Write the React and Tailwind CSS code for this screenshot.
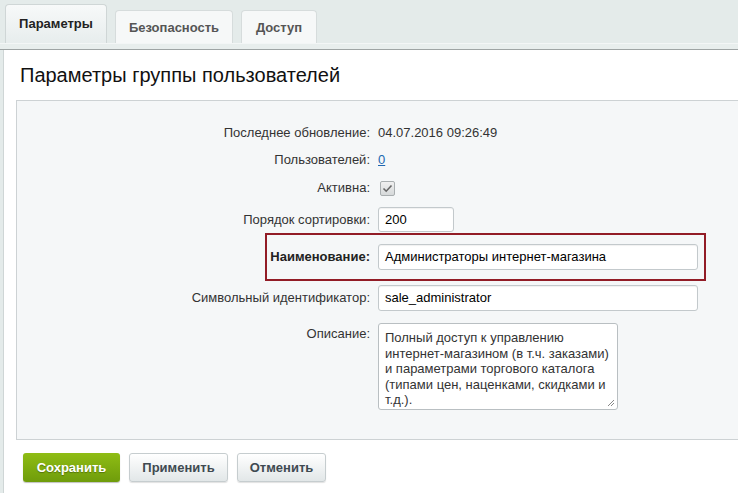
import React from 'react';

const tabs = [
	{ id: 'params', title: 'Параметры', active: true, w: 'w-[102px]' },
	{ id: 'security', title: 'Безопасность', w: 'w-[118px]' },
	{ id: 'access', title: 'Доступ', w: 'w-[76px]' },
];

function Label({ children, bold }) {
	return (
		<div className={`w-[361px] shrink-0 pr-[8px] text-right text-[13px] text-[#333] ${bold ? 'font-bold text-[#222]' : ''}`}>
			{children}
		</div>
	);
}

function TextInput({ value, className = '' }) {
	return (
		<div
			className={`flex items-center rounded-[3px] border border-[#c3c9cc] bg-white pl-[6px] text-[13px] text-black shadow-[inset_0_1px_1px_rgba(0,0,0,0.06)] ${className}`}
		>
			{value}
		</div>
	);
}

export default function App() {
	return (
		<div className="h-[493px] w-full overflow-hidden bg-[#e4ebea] font-['Liberation_Sans',Arial,sans-serif]">
			{/* вкладки */}
			<div className="flex h-[43px] items-end gap-[8px] pl-[5px]">
				{tabs.map((tab) => (
					<div
						key={tab.id}
						className={`flex items-center justify-center rounded-t-[4px] border border-b-0 text-[13px] font-bold ${tab.w} ${
							tab.active
								? 'h-[39px] border-[#cfd6d6] bg-gradient-to-b from-[#f7f9f9] to-[#e7eded] text-[#222]'
								: 'h-[33px] border-[#d6dcdc] bg-[#f6f8f8] text-[#555]'
						}`}
					>
						<span className={tab.active ? '' : 'pt-[1px]'}>{tab.title}</span>
					</div>
				))}
			</div>
			<div className="h-[7px] border-t border-[#f3f6f6] border-b-[1px] border-b-[#9ea4a4] bg-[#e8eeed]" />

			{/* панель */}
			<div className="ml-[3px] h-[443px] border-l border-[#cfd6d6] bg-white">
				<h1 className="pl-[16px] pt-[13px] text-[20px] leading-[24px] text-[#111]">Параметры группы пользователей</h1>

				<div className="ml-[12px] mt-[13px] h-[340px] border border-r-0 border-[#cdd2d4] bg-[#f5f7f8] pt-[22px]">
					<div className="flex h-[20px] items-center">
						<Label>Последнее обновление:</Label>
						<span className="text-[13px] text-[#333]">04.07.2016 09:26:49</span>
					</div>

					<div className="mt-[7px] flex h-[20px] items-center">
						<Label>Пользователей:</Label>
						<a className="text-[13px] text-[#2067b0] underline">0</a>
					</div>

					<div className="mt-[8px] flex h-[20px] items-center">
						<Label>Активна:</Label>
						<span className="ml-[2px] flex h-[15px] w-[15px] items-center justify-center rounded-[2px] border border-[#a9aeb0] bg-gradient-to-b from-[#f0f0f0] to-[#d6d9da]">
							<svg width="11" height="9" viewBox="0 0 11 9" fill="none">
								<path d="M1.5 4.5 L4.2 7.2 L9.5 1.5" stroke="#666" strokeWidth="1.6" />
							</svg>
						</span>
					</div>

					<div className="mt-[9px] flex h-[25px] items-center">
						<Label>Порядок сортировки:</Label>
						<TextInput value="200" className="h-[25px] w-[76px]" />
					</div>

					{/* выделенное поле */}
					<div className="ml-[248px] mt-[1px] flex h-[48px] w-[441px] items-center border-2 border-[#921c26]">
						<div className="w-[111px] shrink-0 pr-[8px] text-right text-[13px] font-bold text-[#222]">Наименование:</div>
						<TextInput value="Администраторы интернет-магазина" className="h-[26px] w-[320px]" />
					</div>

					<div className="mt-[4px] flex h-[26px] items-center">
						<Label>Символьный идентификатор:</Label>
						<TextInput value="sale_administrator" className="h-[26px] w-[320px]" />
					</div>

					<div className="mt-[12px] flex items-start">
						<div className="w-[361px] shrink-0 pr-[8px] pt-[1px] text-right text-[13px] text-[#333]">Описание:</div>
						<div className="relative h-[87px] w-[240px] rounded-[3px] border border-[#b9bfc2] bg-white px-[6px] pt-[6px] text-[13px] leading-[15.5px] text-[#333]">
							Полный доступ к управлению интернет-магазином (в т.ч. заказами) и параметрами торгового каталога (типами цен,
							наценками, скидками и т.д.).
							<svg className="absolute bottom-[2px] right-[2px]" width="8" height="8" viewBox="0 0 8 8">
								<path d="M7 1 L1 7 M7 4 L4 7" stroke="#888" strokeWidth="1" />
							</svg>
						</div>
					</div>
				</div>

				{/* кнопки */}
				<div className="ml-[19px] mt-[13px] flex gap-[9px]">
					<button className="h-[29px] w-[97px] rounded-[3px] bg-gradient-to-b from-[#8fbd14] to-[#6f9c0b] text-[13px] font-bold text-white shadow-[0_1px_1px_rgba(0,0,0,0.25)] [text-shadow:0_1px_1px_rgba(0,0,0,0.3)]">
						Сохранить
					</button>
					<button className="h-[29px] w-[99px] rounded-[3px] border border-[#c6cdcf] bg-gradient-to-b from-[#ffffff] to-[#e2e7e8] text-[13px] font-bold text-[#3f4a51] shadow-[0_1px_1px_rgba(0,0,0,0.12)]">
						Применить
					</button>
					<button className="h-[29px] w-[89px] rounded-[3px] border border-[#c6cdcf] bg-gradient-to-b from-[#ffffff] to-[#e2e7e8] text-[13px] font-bold text-[#3f4a51] shadow-[0_1px_1px_rgba(0,0,0,0.12)]">
						Отменить
					</button>
				</div>
			</div>
		</div>
	);
}
